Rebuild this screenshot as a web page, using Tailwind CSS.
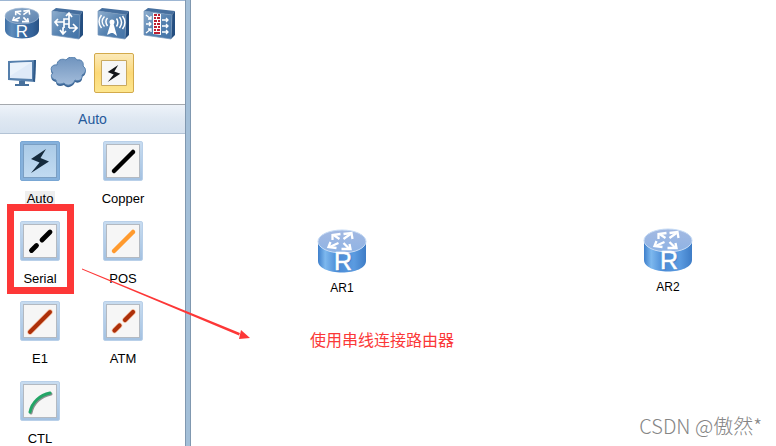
<!DOCTYPE html>
<html lang="zh-CN">
<head>
<meta charset="utf-8">
<meta name="viewport" content="width=device-width, initial-scale=1">
<title>Network topology</title>
<script src="https://cdn.jsdelivr.net/npm/@tailwindcss/browser@4"></script>
</head>
<body class="relative flex h-screen overflow-hidden bg-white font-['Liberation_Sans','Noto_Sans_CJK_SC',sans-serif] text-[13px] text-black">

<!-- Shared gradients and symbols -->
<svg class="absolute size-0" aria-hidden="true">
  <defs>
    <linearGradient id="side" x1="0" x2="1" y1="0" y2="0"><stop offset="0" stop-color="#3e6fa5"/><stop offset=".2" stop-color="#5f8dbc"/><stop offset=".5" stop-color="#3b6ca2"/><stop offset=".8" stop-color="#34639a"/><stop offset="1" stop-color="#295284"/></linearGradient>
    <linearGradient id="lid" x1="0" x2="1" y1="0" y2="1"><stop offset="0" stop-color="#8fadcd"/><stop offset="1" stop-color="#5a80ad"/></linearGradient>
    <linearGradient id="face" x1="0" x2="1" y1="0" y2="1"><stop offset="0" stop-color="#8fafcf"/><stop offset=".5" stop-color="#5783b1"/><stop offset="1" stop-color="#4273a8"/></linearGradient>
    <linearGradient id="cloud" x1="0" x2="0" y1="0" y2="1"><stop offset="0" stop-color="#6f93be"/><stop offset="1" stop-color="#a4bddb"/></linearGradient>
    <linearGradient id="nodeside" x1="0" x2="1" y1="0" y2="0"><stop offset="0" stop-color="#3e7fcb"/><stop offset=".15" stop-color="#7db8ee"/><stop offset=".4" stop-color="#4a8bd6"/><stop offset=".75" stop-color="#5b9be0"/><stop offset="1" stop-color="#3e7cc6"/></linearGradient>
    <linearGradient id="nodelid" x1="0" x2="0" y1="0" y2="1"><stop offset="0" stop-color="#a3b9e2"/><stop offset="1" stop-color="#8fb3e4"/></linearGradient>
    <symbol id="arrows" viewBox="0 0 30 20">
      <g fill="none" stroke="#fff" stroke-width="2.300">
        <path d="M13 8 7 4M17 8l7-5M12 12l-9 4M17 12l6 6"/>
        <path d="M6 9V4l8-1M17 3l8-1 1 6M4 11l-2 5 8 1M15 18h9l-1-5"/>
      </g>
    </symbol>
    <symbol id="node" viewBox="0 0 50 44" overflow="visible">
      <path d="M1 13v19c0 7 11 11.500 24 11.500S49 39 49 32V13z" fill="url(#nodeside)"/>
      <ellipse cx="25" cy="12.500" rx="24" ry="11.500" fill="url(#nodelid)" stroke="#c6dbf5"/>
      <use href="#arrows" x="9" y="2" width="31" height="20"/>
      <text x="27" y="42" text-anchor="middle" font-family="Liberation Sans, sans-serif" font-size="25" fill="#31649f" opacity=".5">R</text>
      <text x="26" y="41" text-anchor="middle" font-family="Liberation Sans, sans-serif" font-size="25" fill="#fff" stroke="#fff" stroke-width=".5">R</text>
    </symbol>
    <symbol id="box" viewBox="0 0 34 34">
      <path d="m1 5 4-3 27 3-3 4z" fill="#466f9e"/>
      <path d="m29 9 3-4v24l-4 4z" fill="#244e80"/>
      <path d="M1 5 29 9l-1 24L1 29z" fill="url(#face)" stroke="#7597ba" stroke-width=".7"/>
    </symbol>
    <symbol id="bolt" viewBox="0 0 20 24">
      <path d="M16 0 1 10l8.500 3.500L1 24l18-11.500L10.500 9z"/>
    </symbol>
  </defs>
</svg>

<aside class="flex w-[185px] shrink-0 flex-col border-t border-[#9db6d3] bg-white">
  <nav aria-label="Device types" class="grid grid-cols-[repeat(4,40px)] gap-x-1.5 gap-y-2.5 pt-0.5 pb-[11px] pl-0.5">
    <button type="button" aria-label="Router" class="grid size-10 place-items-center">
      <svg class="h-8 w-9 overflow-visible" viewBox="0 0 36 32"><path d="M1 9v14c0 5 7 8.500 17 8.500S35 28 35 23V9z" fill="url(#side)"/><ellipse cx="18" cy="9" rx="17" ry="8" fill="url(#lid)" stroke="#a7bdd7" stroke-width=".6"/><use href="#arrows" x="7" y="2" width="22" height="14"/><text x="18" y="30" text-anchor="middle" font-family="Liberation Sans, sans-serif" font-size="17" fill="#fff">R</text></svg>
    </button>
    <button type="button" aria-label="Switch" class="grid size-10 place-items-center">
      <svg class="size-[34px]" viewBox="0 0 34 34"><use href="#box" width="34" height="34"/><g fill="none" stroke="#fff" stroke-width="1.700"><path d="M13 22V16H4M7 13l-3 3 3 4M13 16v-3h5v9M18 13V8M15 10l3-3 3 4M13 22h-1v5M9 24l3 4 3-3M18 22h7M22 18l4 4-4 4M13 18h5"/></g></svg>
    </button>
    <button type="button" aria-label="WLAN" class="grid size-10 place-items-center">
      <svg class="size-[34px]" viewBox="0 0 34 34"><use href="#box" width="34" height="34"/><path d="m14 16-4 13 4-2h2l4 3-4-14z" fill="#fff"/><circle cx="15" cy="16" r="2.500" fill="#fff"/><g fill="none" stroke="#fff" stroke-width="1.500"><path d="M10.500 12c-2 2-2 5 0 8M7.500 10.500c-3 3-3 7 0 10M4.500 9c-3 4-3 9 0 13M19.500 12.500c2 3 2 5 0 8M22.500 11c3 4 3 7 0 11M25.500 10c3 4 3 9 0 13"/></g></svg>
    </button>
    <button type="button" aria-label="Firewall" class="grid size-10 place-items-center">
      <svg class="size-[34px]" viewBox="0 0 34 34"><use href="#box" width="34" height="34"/><path d="m10 7 8 1v21l-8-1z" fill="#fff"/><path d="M11 9h3M15 9h2M11 12h2M14 12h3M11 15h3M15 15h2M11 18h2M14 18h3M11 21h3M15 21h2M11 24h2M14 24h3M11 27h6" stroke="#bd2031" stroke-width="2.200"/><g fill="none" stroke="#fff" stroke-width="1.300"><path d="m3 9 5 4M8 10v3H5M3 18h5M6 16l2 2-2 2M3 27l5-4M5 23h3v3M19 14h6M23 12l2 2-2 2M19 20h6M23 18l2 2-2 2M19 26h6M23 24l2 2-2 2"/></g></svg>
    </button>
    <button type="button" aria-label="Endpoint" class="grid size-10 place-items-center">
      <svg class="h-7 w-[30px]" viewBox="0 0 30 28"><path d="M12 22h6v3h4v2H8v-2h4z" fill="#48719c"/><path d="m1 2 28-1-1 22L1 21z" fill="#557fac"/><path d="m27 1 2 0-1 22-2-1z" fill="#2f5a89"/><path d="m3 4 22-1v17L3 19z" fill="#dfeaf8"/><path d="m3 4 22-1L3 17z" fill="#eaf2fb"/></svg>
    </button>
    <button type="button" aria-label="Cloud" class="grid size-10 place-items-center">
      <svg class="h-8 w-9" viewBox="0 0 36 32"><path d="M6 24c-5-1-6-5-3-7-4-4-1-9 4-8 0-5 5-7 9-5 3-4 9-4 11 0 5-1 7 3 6 6 4 3 3 7-1 9 1 4-3 7-7 5-2 5-8 7-11 3-4 2-8 1-8-3z" transform="translate(0 1)" fill="#3b6595"/><path d="M6 23c-5-1-6-5-3-7-4-4-1-9 4-8 0-5 5-7 9-5 3-4 9-4 11 0 5-1 7 3 6 6 4 3 3 7-1 9 1 4-3 7-7 5-2 5-8 7-11 3-4 2-8 1-8-3z" fill="url(#cloud)" stroke="#5580ae"/></svg>
    </button>
    <button type="button" aria-label="Connections" aria-pressed="true" class="grid size-10 place-items-center rounded-xs border border-[#d3aa4b] bg-linear-to-b from-[#fbe9b8] via-[#fcd978] to-[#fde68e]">
      <svg class="size-[26px]" viewBox="0 0 26 26"><path d="M.5.5h25v25H.5z" fill="#f7f7f7" stroke="#c9a95f"/><use href="#bolt" x="6" y="5" width="14" height="17" fill="#15171b"/></svg>
    </button>
  </nav>

  <h2 class="flex h-[30px] shrink-0 items-center justify-center border-t border-b border-t-[#a5a9ae] border-b-[#b3c3d5] bg-linear-to-b from-[#eef3f9] via-[#dfe8f2] to-[#d6e2ef] text-[14px] text-[#265a9b]">Auto</h2>

  <ul class="grid grid-cols-[80px_80px] gap-x-[3px] gap-y-3.5 pt-[7px]">
    <li><button type="button" class="flex w-full flex-col items-center gap-2.5">
      <span class="grid size-10 place-items-center rounded-xs border border-[#79a7d4] bg-[#85b1dc] p-0.5"><span class="grid size-full place-items-center border border-[#7b9fc3] bg-linear-to-b from-[#abcbe7] to-[#c1dbf1]"><svg class="h-6 w-5" viewBox="0 0 20 24"><use href="#bolt" width="20" height="24" fill="#152b3d"/></svg></span></span>
      <span class="bg-[#eeeeee] px-0.5 leading-4">Auto</span></button></li>
    <li><button type="button" class="flex w-full flex-col items-center gap-2.5">
      <span class="size-10 rounded-xs border border-[#b9d0e9] bg-linear-to-b from-[#c8dcf0] to-[#a3c1e1] p-0.5"><svg class="size-full border border-[#b3b9c1] bg-[#f6f6f6]" viewBox="0 0 32 32"><path d="M7 26 26 7" stroke="#000" stroke-width="4.500" stroke-linecap="round"/></svg></span>
      <span class="leading-4">Copper</span></button></li>
    <li><button type="button" class="flex w-full flex-col items-center gap-2.5">
      <span class="size-10 rounded-xs border border-[#b9d0e9] bg-linear-to-b from-[#c8dcf0] to-[#a3c1e1] p-0.5"><svg class="size-full border border-[#b3b9c1] bg-[#f6f6f6]" viewBox="0 0 32 32"><path d="m7.500 25.500 5-5M18 15l8-8" stroke="#000" stroke-width="4.800" stroke-linecap="round"/></svg></span>
      <span class="leading-4">Serial</span></button></li>
    <li><button type="button" class="flex w-full flex-col items-center gap-2.5">
      <span class="size-10 rounded-xs border border-[#b9d0e9] bg-linear-to-b from-[#c8dcf0] to-[#a3c1e1] p-0.5"><svg class="size-full border border-[#b3b9c1] bg-[#f6f6f6]" viewBox="0 0 32 32"><path d="M7 26 26 7" stroke="#ff9a2e" stroke-width="4.500" stroke-linecap="round"/></svg></span>
      <span class="leading-4">POS</span></button></li>
    <li><button type="button" class="flex w-full flex-col items-center gap-2.5">
      <span class="size-10 rounded-xs border border-[#b9d0e9] bg-linear-to-b from-[#c8dcf0] to-[#a3c1e1] p-0.5"><svg class="size-full border border-[#b3b9c1] bg-[#f6f6f6]" viewBox="0 0 32 32"><path d="M6 27 26 7" stroke="#f6c5a8" stroke-width="5.500" stroke-linecap="round"/><path d="M6 27 26 7" stroke="#ad300a" stroke-width="4" stroke-linecap="round"/></svg></span>
      <span class="leading-4">E1</span></button></li>
    <li><button type="button" class="flex w-full flex-col items-center gap-2.5">
      <span class="size-10 rounded-xs border border-[#b9d0e9] bg-linear-to-b from-[#c8dcf0] to-[#a3c1e1] p-0.5"><svg class="size-full border border-[#b3b9c1] bg-[#f6f6f6]" viewBox="0 0 32 32"><path d="m7.500 25.500 5-5M18 15l8-8" stroke="#f6c5a8" stroke-width="5.500" stroke-linecap="round"/><path d="m7.500 25.500 5-5M18 15l8-8" stroke="#ad300a" stroke-width="4.200" stroke-linecap="round"/></svg></span>
      <span class="leading-4">ATM</span></button></li>
    <li><button type="button" class="flex w-full flex-col items-center gap-2.5">
      <span class="size-10 rounded-xs border border-[#b9d0e9] bg-linear-to-b from-[#c8dcf0] to-[#a3c1e1] p-0.5"><svg class="size-full border border-[#b3b9c1] bg-[#f6f6f6]" viewBox="0 0 32 32"><path d="M7 28C9 18 17 11 27 9" fill="none" stroke="#8b9090" stroke-width="3" stroke-linecap="round"/><path d="M6 27C8 17 16 10 26 8" fill="none" stroke="#23a566" stroke-width="3" stroke-linecap="round"/></svg></span>
      <span class="leading-4">CTL</span></button></li>
  </ul>
</aside>

<div class="w-1.5 shrink-0 border-x border-[#8098b0] bg-[#a3bfd8]"></div>

<main class="relative min-w-0 flex-1 bg-white">
  <figure class="absolute top-[229px] left-[126px] flex w-[50px] flex-col items-center gap-[7px]">
    <svg class="h-11 w-[50px] overflow-visible" aria-hidden="true"><use href="#node" width="50" height="44"/></svg>
    <figcaption class="text-[12px] leading-4">AR1</figcaption>
  </figure>
  <figure class="absolute top-[228px] left-[452px] flex w-[50px] flex-col items-center gap-[7px]">
    <svg class="h-11 w-[50px] overflow-visible" aria-hidden="true"><use href="#node" width="50" height="44"/></svg>
    <figcaption class="text-[12px] leading-4">AR2</figcaption>
  </figure>
  <p class="absolute top-[327px] left-[119px] font-['Noto_Sans_CJK_SC',sans-serif] text-[16px] leading-6 whitespace-nowrap text-[#fb3838]">使用串线连接路由器</p>
  <p class="absolute right-3.5 bottom-1.5 font-['Noto_Sans_CJK_SC',sans-serif] text-[20px] leading-7 font-light whitespace-nowrap text-[#858585]">CSDN @傲然*</p>
</main>

<!-- Annotation layer -->
<div class="pointer-events-none absolute top-[204px] left-[7px] h-[90px] w-[67px] border-7 border-[#fd3737]"></div>
<svg class="pointer-events-none absolute top-[264px] left-[80px] h-20 w-[180px]" viewBox="0 0 180 80" fill="#fd3737" aria-hidden="true">
  <path d="m2 4.500 158 64.500-1 2.500L2 5.500zM161 66l9 8-11 1z"/>
</svg>
</body>
</html>
